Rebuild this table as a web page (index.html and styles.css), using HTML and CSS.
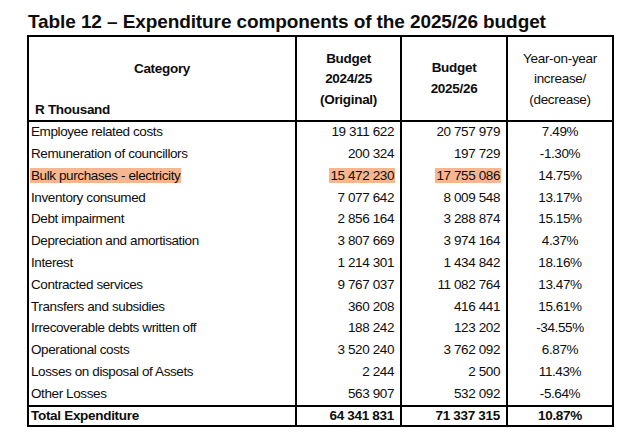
FILE: index.html
```html
<!DOCTYPE html>
<html lang="en">
<head>
<meta charset="utf-8">
<title>Table 12 – Expenditure components of the 2025/26 budget</title>
<link rel="stylesheet" href="styles.css">
</head>
<body>
<h1 class="title">Table 12 – Expenditure components of the 2025/26 budget</h1>
<table class="budget">
  <colgroup>
    <col class="c-cat">
    <col class="c-num">
    <col class="c-num2">
    <col class="c-pct">
  </colgroup>
  <thead>
    <tr>
      <th class="h-cat"><div class="h-cat-label">Category</div><div class="h-unit">R Thousand</div></th>
      <th>Budget<br>2024/25<br>(Original)</th>
      <th class="h-two">Budget<br>2025/26</th>
      <th class="h-light">Year-on-year<br>increase/<br>(decrease)</th>
    </tr>
  </thead>
  <tbody>
    <tr><td class="cat">Employee related costs</td><td class="num">19 311 622</td><td class="num">20 757 979</td><td class="pct">7.49%</td></tr>
    <tr><td class="cat">Remuneration of councillors</td><td class="num">200 324</td><td class="num">197 729</td><td class="pct">-1.30%</td></tr>
    <tr><td class="cat"><span class="hl">Bulk purchases - electricity</span></td><td class="num"><span class="hl">15 472 230</span></td><td class="num"><span class="hl">17 755 086</span></td><td class="pct">14.75%</td></tr>
    <tr><td class="cat">Inventory consumed</td><td class="num">7 077 642</td><td class="num">8 009 548</td><td class="pct">13.17%</td></tr>
    <tr><td class="cat">Debt impairment</td><td class="num">2 856 164</td><td class="num">3 288 874</td><td class="pct">15.15%</td></tr>
    <tr><td class="cat">Depreciation and amortisation</td><td class="num">3 807 669</td><td class="num">3 974 164</td><td class="pct">4.37%</td></tr>
    <tr><td class="cat">Interest</td><td class="num">1 214 301</td><td class="num">1 434 842</td><td class="pct">18.16%</td></tr>
    <tr><td class="cat">Contracted services</td><td class="num">9 767 037</td><td class="num">11 082 764</td><td class="pct">13.47%</td></tr>
    <tr><td class="cat">Transfers and subsidies</td><td class="num">360 208</td><td class="num">416 441</td><td class="pct">15.61%</td></tr>
    <tr><td class="cat">Irrecoverable debts written off</td><td class="num">188 242</td><td class="num">123 202</td><td class="pct">-34.55%</td></tr>
    <tr><td class="cat">Operational costs</td><td class="num">3 520 240</td><td class="num">3 762 092</td><td class="pct">6.87%</td></tr>
    <tr><td class="cat">Losses on disposal of Assets</td><td class="num">2 244</td><td class="num">2 500</td><td class="pct">11.43%</td></tr>
    <tr><td class="cat">Other Losses</td><td class="num">563 907</td><td class="num">532 092</td><td class="pct">-5.64%</td></tr>
  </tbody>
  <tfoot>
    <tr class="total"><td class="cat">Total Expenditure</td><td class="num">64 341 831</td><td class="num">71 337 315</td><td class="pct">10.87%</td></tr>
  </tfoot>
</table>
</body>
</html>
```

FILE: styles.css
```css
body {
  margin: 0;
  background: #fff;
  color: #0d0d0d;
  font-family: "Liberation Sans", Arial, sans-serif;
}

.title {
  margin: 0 0 2px 0;
  padding: 11px 0 0 28px;
  height: 22px;
  line-height: 22px;
  font-size: 19px;
  font-weight: bold;
  letter-spacing: -0.1px;
  color: #0d0d0d;
}

.budget {
  margin-left: 27px;
  width: 587px;
  table-layout: fixed;
  border-collapse: separate;
  border-spacing: 0;
  border: 2px solid #000;
  font-size: 13.5px;
  letter-spacing: -0.4px;
}

.c-cat { width: 266px; }
.c-num { width: 105px; }
.c-num2 { width: 106px; }
.c-pct { width: 106px; }

.budget th,
.budget td {
  padding: 0;
  box-sizing: border-box;
}

.budget th + th,
.budget td + td {
  border-left: 2px solid #000;
}

.budget thead th {
  height: 85px;
  border-bottom: 2px solid #000;
  font-weight: bold;
  letter-spacing: -0.3px;
  line-height: 20.5px;
  vertical-align: middle;
  text-align: center;
  padding-top: 2px;
}

.budget thead th.h-cat {
  vertical-align: top;
  text-align: left;
  padding-top: 22px;
}

.h-cat-label {
  text-align: center;
  line-height: 20px;
}

.h-unit {
  margin-top: 21px;
  padding-left: 6px;
  line-height: 20px;
}

.budget thead th.h-two {
  padding-top: 0;
}

.budget thead th.h-light {
  font-weight: normal;
}

.budget tbody td {
  height: 21.77px;
  line-height: 15px;
  vertical-align: middle;
  padding-bottom: 2px;
}

.budget td.cat {
  padding-left: 2px;
  text-align: left;
}

.budget td.num {
  text-align: right;
  padding-right: 6px;
}

.budget td.pct {
  text-align: center;
}

.hl {
  background: #f6b790;
  padding: 0 1px;
  margin: 0 -1px;
}

.budget tfoot td {
  height: 20px;
  border-top: 2px solid #000;
  font-weight: bold;
  letter-spacing: -0.3px;
  line-height: 15px;
  vertical-align: middle;
}
```
